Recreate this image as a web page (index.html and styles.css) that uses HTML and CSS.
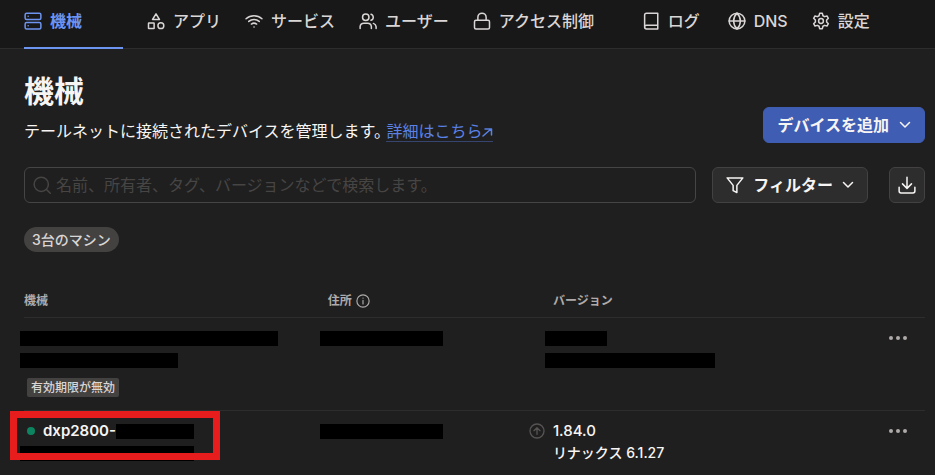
FILE: index.html
```html
<!DOCTYPE html>
<html lang="ja">

<head>
    <meta charset="UTF-8">
    <meta name="viewport" content="width=device-width, initial-scale=1">
    <title>機械</title>
    <link rel="stylesheet" href="styles.css">
</head>

<body>
    <header class="header">
        <nav class="tabs">
            <a class="tab tab-machines active" href="#">
                <svg class="icon" viewBox="0 0 24 24"><rect x="1.5" y="1.5" width="21" height="8.5" rx="2"/><rect x="1.5" y="14" width="21" height="8.5" rx="2"/><path d="M5.5 5.8h.1M5.5 18.2h.1"/></svg>
                機械
            </a>
            <a class="tab" href="#">
                <svg class="icon" viewBox="0 0 24 24"><path d="M12 2.5l4.6 7.5H7.4z"/><rect x="2" y="14.5" width="7.5" height="7.5" rx=".5"/><circle cx="18.5" cy="18.2" r="3.9"/></svg>
                アプリ
            </a>
            <a class="tab" href="#">
                <svg class="icon" viewBox="0 0 24 24"><path d="M1.4 9a16 16 0 0 1 21.2 0M5 12.6a11 11 0 0 1 14 0M8.5 16.1a6 6 0 0 1 7 0M12 20h.1"/></svg>
                サービス
            </a>
            <a class="tab" href="#">
                <svg class="icon" viewBox="0 0 24 24"><circle cx="9" cy="7" r="4.3"/><path d="M1.5 22v-2.5a5 5 0 0 1 5-4.5h5a5 5 0 0 1 5 4.5V22M16 2.9a4.3 4.3 0 0 1 0 8.2M22.8 22v-2.5a5 5 0 0 0-3.600-4.300"/></svg>
                ユーザー
            </a>
            <a class="tab tab-access" href="#">
                <svg class="icon" viewBox="0 0 24 24"><rect x="2" y="11" width="20" height="11.5" rx="2"/><path d="M6.5 11V7a5.5 5.5 0 0 1 11 0v4"/></svg>
                アクセス制御
            </a>
            <a class="tab tab-logs" href="#">
                <svg class="icon" viewBox="0 0 24 24"><path d="M3.5 20V4a2.500 2.500 0 0 1 2.500-2.500h15v21H6A2.500 2.500 0 0 1 6 17.500h15"/></svg>
                ログ
            </a>
            <a class="tab" href="#">
                <svg class="icon" viewBox="0 0 24 24"><circle cx="12" cy="12" r="10.5"/><path d="M1.5 12h21M12 1.5c6 6 6 15 0 21c-6-6-6-15 0-21z"/></svg>
                DNS
            </a>
            <a class="tab" href="#">
                <svg class="icon" viewBox="0 0 24 24"><circle cx="12" cy="12" r="3.2"/><path d="M10.2 1.8h3.6l.8 3.2 2.2 1.2 3.2-.9 1.8 3.1-2.3 2.4v2.4l2.3 2.4-1.8 3.1-3.2-.9-2.2 1.2-.8 3.2h-3.6l-.8-3.2-2.200-1.200-3.200.9-1.800-3.100 2.300-2.400v-2.400L2.200 8.400 4 5.300l3.200.9L9.400 5z"/></svg>
                設定
            </a>
        </nav>
    </header>

    <main class="page">
        <div class="title-row">
            <div>
                <h1>機械</h1>
                <p class="intro">テールネットに接続されたデバイスを管理します。 <a class="more" href="#">詳細はこちら<svg class="arrow" viewBox="0 0 11 11"><path d="M1 10l8-7M3 3h6.500v6"/></svg></a></p>
            </div>
            <button class="btn btn-primary" type="button">
                デバイスを追加
                <svg class="chevron" viewBox="0 0 12 12"><path d="M1.500 3.500l4.500 4.500 4.500-4.500"/></svg>
            </button>
        </div>

        <div class="toolbar">
            <label class="search">
                <svg class="icon" viewBox="0 0 24 24"><circle cx="11" cy="11" r="9.5"/><path d="M18 18l5 5"/></svg>
                <input type="text" aria-label="検索" placeholder="名前、所有者、タグ、バージョンなどで検索します。">
            </label>
            <button class="btn" type="button">
                <svg class="icon" viewBox="0 0 24 24"><path d="M1.500 2.500h21l-8 10v9.500l-5-2.500v-7z"/></svg>
                フィルター
                <svg class="chevron" viewBox="0 0 12 12"><path d="M1.500 3.500l4.500 4.500 4.500-4.500"/></svg>
            </button>
            <button class="btn btn-download" type="button" aria-label="ダウンロード">
                <svg class="icon" viewBox="0 0 24 24"><path d="M1.500 15v5a2.500 2.500 0 0 0 2.500 2.500h16a2.500 2.500 0 0 0 2.500-2.500v-5M12 1.500v14.500M6 10.500l6 6 6-6"/></svg>
            </button>
        </div>

        <div class="count">3台のマシン</div>

        <table class="machines">
            <thead>
                <tr>
                    <th class="col-name">機械</th>
                    <th class="col-address"><span class="with-info">住所 <svg class="info" viewBox="0 0 24 24"><circle cx="12" cy="12" r="10.5"/><path d="M12 11v6M12 7h.1"/></svg></span></th>
                    <th class="col-version">バージョン</th>
                    <th class="col-menu"></th>
                </tr>
            </thead>
            <tbody>
                <tr>
                    <td>
                        <div class="line"><span class="mask mask-xl"></span></div>
                        <div class="subline"><span class="mask mask-lg"></span></div>
                        <span class="badge">有効期限が無効</span>
                    </td>
                    <td>
                        <div class="line"><span class="mask mask-wide mask-md"></span></div>
                    </td>
                    <td>
                        <div class="line"><span class="mask mask-wide mask-sm"></span></div>
                        <div class="subline"><span class="mask mask-wide mask-os"></span></div>
                    </td>
                    <td>
                        <button class="menu" type="button" aria-label="メニュー"><svg viewBox="0 0 18 4"><circle cx="2" cy="2" r="2"/><circle cx="9" cy="2" r="2"/><circle cx="16" cy="2" r="2"/></svg></button>
                    </td>
                </tr>
                <tr>
                    <td class="marked">
                        <div class="line name"><span class="dot"></span>dxp2800-<span class="mask mask-host"></span></div>
                        <div class="subline"><span class="mask mask-owner"></span></div>
                    </td>
                    <td>
                        <div class="line"><span class="mask mask-wide mask-md"></span></div>
                    </td>
                    <td>
                        <div class="line with-update"><svg class="update" viewBox="0 0 24 24"><circle cx="12" cy="12" r="10.5"/><path d="M12 17V7M7.500 11.500L12 7l4.500 4.500"/></svg>1.84.0</div>
                        <div class="subline">リナックス 6.1.27</div>
                    </td>
                    <td>
                        <button class="menu" type="button" aria-label="メニュー"><svg viewBox="0 0 18 4"><circle cx="2" cy="2" r="2"/><circle cx="9" cy="2" r="2"/><circle cx="16" cy="2" r="2"/></svg></button>
                    </td>
                </tr>
            </tbody>
        </table>
    </main>
</body>

</html>
```
FILE: styles.css
```css
* {
    box-sizing: border-box;
}

body {
    margin: 0;
    background-color: #1f1f1f;
    color: #f7f5f4;
    font-family: Inter, "Noto Sans CJK JP", sans-serif;
    font-size: 16px;
    line-height: 24px;
}

svg {
    flex: none;
    fill: none;
    stroke: currentColor;
    stroke-width: 2;
    stroke-linecap: round;
    stroke-linejoin: round;
}

.icon {
    width: 18px;
    height: 18px;
}

.header {
    background-color: #181818;
    border-bottom: 1px solid #2e2d2d;
    padding: 0 24px;
}

.tabs {
    display: flex;
    gap: 24px;
    height: 48px;
}

.tab {
    display: flex;
    align-items: center;
    gap: 8px;
    height: 49px;
    padding-bottom: 5px;
    border-bottom: 2px solid transparent;
    color: #dad6d5;
    font-weight: 500;
    text-decoration: none;
    white-space: nowrap;
}

.tab.active {
    color: #6d94f0;
    border-bottom-color: #6d94f0;
    font-weight: 600;
}

.tab-machines {
    min-width: 99px;
}

.tab-access {
    min-width: 145px;
}

.tab-logs {
    min-width: 62px;
}

.page {
    padding: 24px 10px 0 24px;
}

.title-row {
    display: flex;
    align-items: flex-end;
    justify-content: space-between;
}

h1 {
    margin: 0 0 10px;
    font-size: 30px;
    line-height: 36px;
    font-weight: 700;
}

.intro {
    margin: 0;
    font-feature-settings: "halt";
}

.more {
    color: #5a82e6;
    text-decoration: none;
    border-bottom: 1px solid #35456f;
}

.arrow {
    width: 11px;
    height: 11px;
    stroke-width: 1.5;
}

.btn {
    display: flex;
    align-items: center;
    gap: 9px;
    height: 36px;
    padding: 0 13px;
    border: 1px solid #434141;
    border-radius: 6px;
    background-color: #2e2d2d;
    color: #f7f5f4;
    font: inherit;
    font-weight: 600;
    white-space: nowrap;
}

.btn-primary {
    gap: 10px;
    background-color: #3f5db3;
    border-color: #3f5db3;
}

.btn-download {
    padding: 0 8px;
    margin-left: 5px;
}

.chevron {
    width: 12px;
    height: 12px;
    stroke-width: 1.5;
}

.toolbar {
    display: flex;
    gap: 16px;
    margin-top: 24px;
}

.search {
    display: flex;
    flex: 1;
    align-items: center;
    gap: 5px;
    height: 36px;
    padding: 0 8px;
    border: 1px solid #474544;
    border-radius: 6px;
    color: #474544;
}

.search input {
    flex: 1;
    padding: 0;
    border: none;
    outline: none;
    background: none;
    color: #f7f5f4;
    font: inherit;
}

.search input::placeholder {
    color: #474544;
}

.count {
    width: fit-content;
    margin: 24px 0 32px;
    padding: 0 8px;
    border-radius: 13px;
    background-color: #444241;
    color: #dad6d5;
    font-size: 14px;
    line-height: 25px;
    font-weight: 500;
}

.machines {
    width: 100%;
    border-collapse: separate;
    border-spacing: 0;
    table-layout: fixed;
}

th {
    height: 34px;
    padding: 0;
    border-bottom: 1px solid #2e2d2d;
    color: #afabaa;
    font-size: 12px;
    line-height: 18px;
    font-weight: 600;
    text-align: left;
}

td {
    padding: 8px 0 13px;
    border-bottom: 1px solid #2e2d2d;
    vertical-align: top;
}

tr:last-child td {
    padding-bottom: 8px;
    border-bottom: none;
}

.col-name {
    width: 33.7%;
}

.col-address {
    width: 25%;
}

.col-menu {
    width: 7%;
}

.with-info {
    display: flex;
    align-items: center;
    gap: 4px;
}

.info {
    width: 14px;
    height: 14px;
}

.line {
    display: flex;
    align-items: center;
    height: 24px;
    font-size: 15px;
    font-weight: 500;
}

.subline {
    display: flex;
    align-items: center;
    height: 20px;
    font-size: 14px;
    font-weight: 500;
}

/* blacked out values */
.mask {
    height: 15px;
    margin-left: -4px;
    background-color: #000;
}

.mask-wide {
    margin-left: -8px;
}

.mask-sm {
    width: 62px;
}

.mask-md {
    width: 123px;
}

.mask-lg {
    width: 158px;
}

.mask-os {
    width: 170px;
}

.mask-owner {
    width: 174px;
}

.mask-xl {
    width: 258px;
}

.mask-host {
    width: 78px;
    margin-left: 0;
}

.badge {
    display: block;
    width: fit-content;
    margin: 8px 0 0 3px;
    padding: 0 4px;
    border-radius: 2px;
    background-color: #444241;
    color: #dad6d5;
    font-size: 12px;
    line-height: 19px;
    font-weight: 500;
}

.name {
    font-weight: 600;
}

.dot {
    width: 8px;
    height: 8px;
    margin: 0 8px 0 3px;
    border-radius: 50%;
    background-color: #0d8460;
}

.marked {
    position: relative;
}

/* red frame over the highlighted machine */
.marked::after {
    content: "";
    position: absolute;
    box-sizing: border-box;
    top: 0;
    left: -14px;
    width: 210px;
    height: 49px;
    border: 7px solid #e71d1d;
}

.with-update {
    gap: 8px;
    margin-left: -24px;
}

.update {
    width: 16px;
    height: 16px;
    color: #575453;
}

.menu {
    display: flex;
    align-items: center;
    height: 24px;
    margin-left: auto;
    padding: 0 18px;
    border: none;
    background: none;
    color: #afabaa;
}

.menu svg {
    width: 18px;
    height: 4px;
    fill: currentColor;
    stroke: none;
}
```
